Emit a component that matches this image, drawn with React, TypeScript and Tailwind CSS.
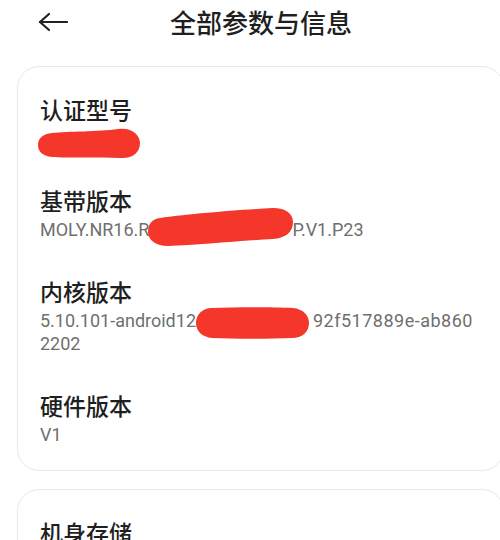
import React from 'react';

const BackArrow = () => (
  <svg width="30" height="20" viewBox="0 0 30 20" fill="none" stroke="#222" strokeWidth={2.2} strokeLinecap="round" strokeLinejoin="round">
    <path d="M2 10 H29" />
    <path d="M11 2 L2 10 L11 18" />
  </svg>
);

const Label = ({ children }: { children: React.ReactNode }) => (
  <div className="text-[23px] leading-[30px] font-medium text-[#1f1f1f]">{children}</div>
);

const Value = ({ children }: { children?: React.ReactNode }) => (
  <div className="mt-[3px] min-h-[23px] text-[18px] leading-[23px] text-[#6f6f6f] font-['Roboto',sans-serif]">{children}</div>
);

// hand drawn red marker strokes covering private info
const BlobA = () => (
  <svg width="102" height="33" viewBox="0 0 102 33" className="absolute left-[-2px] top-0">
    <path d="M14 6 C30 4 60 5 80 2 C94 0 102 8 102 16 C102 26 94 32 82 31 C60 30 30 31 14 30 C4 29 0 24 0 18 C0 11 5 7 14 6 Z" fill="#f4362b" />
  </svg>
);

const BlobB = () => (
  <svg width="145" height="38" viewBox="0 0 145 38" className="absolute left-[-1px] top-[-10px]">
    <path d="M12 10 C40 6 90 2 125 0 C138 0 145 6 145 14 C145 24 138 30 125 31 C90 33 50 37 20 38 C8 38 0 32 0 24 C0 16 4 11 12 10 Z" fill="#f4362b" />
  </svg>
);

const BlobC = () => (
  <svg width="113" height="32" viewBox="0 0 113 32" className="absolute left-[-5px] top-[-2px]">
    <path d="M16 1 C40 0 75 0 97 1 C107 2 113 8 113 16 C113 25 106 31 96 31 C70 32 40 32 16 31 C6 30 0 24 0 16 C0 8 6 1 16 1 Z" fill="#f4362b" />
  </svg>
);

export default function App() {
  return (
    <div className="w-[500px] h-[540px] overflow-hidden bg-white font-['Noto_Sans_CJK_SC',sans-serif]">
      <div className="flex items-center h-[44px]">
        <div className="ml-[38px] flex items-center">
          <BackArrow />
        </div>
        <h1 className="ml-[102px] text-[26px] leading-[44px] font-medium text-[#1f1f1f]">全部参数与信息</h1>
      </div>

      <div className="mt-[22px] ml-[17px] mr-[-4px] rounded-[22px] border border-[#e8e8e8] bg-white pl-[22px] pr-[24px] pt-[27px] pb-[24px]">
        <div className="flex flex-col gap-[35px]">
          <div>
            <Label>认证型号</Label>
            <Value>
              <span className="relative inline-block w-[100px] h-[23px] align-top">
                <BlobA />
              </span>
            </Value>
          </div>
          <div>
            <Label>基带版本</Label>
            <Value>
              MOLY.NR16.R
              <span className="relative inline-block w-[143px] h-[23px] align-top">
                <BlobB />
              </span>
              P.V1.P23
            </Value>
          </div>
          <div>
            <Label>内核版本</Label>
            <Value>
              5.10.101-android12-
              <span className="relative inline-block w-[112px] h-[23px] align-top">
                <BlobC />
              </span>
              <span className="tracking-[0.5px]">92f517889e-ab860</span>
              <br />
              2202
            </Value>
          </div>
          <div>
            <Label>硬件版本</Label>
            <Value>V1</Value>
          </div>
        </div>
      </div>

      <div className="mt-[18px] ml-[17px] mr-[-4px] rounded-[22px] border border-[#e8e8e8] bg-white pl-[22px] pt-[27px] pb-[24px]">
        <Label>机身存储</Label>
        <Value>256 GB</Value>
      </div>
    </div>
  );
}
